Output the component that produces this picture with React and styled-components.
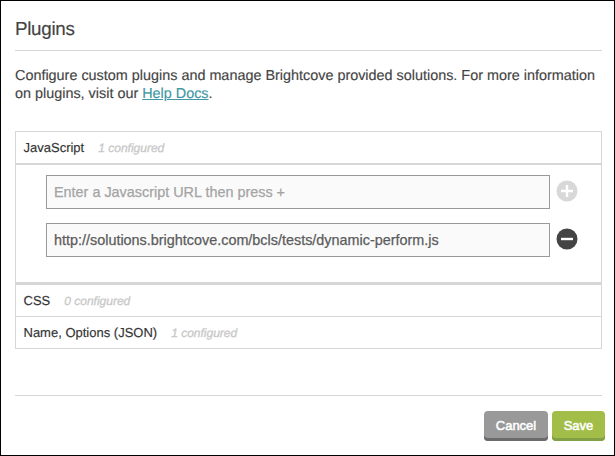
import React from 'react';
import styled, { createGlobalStyle } from 'styled-components';

const GlobalStyle = createGlobalStyle`
  *, *::before, *::after { box-sizing: border-box; }
  body { margin: 0; background: #fff; }
  button, input { font-family: inherit; }
`;

const Dialog = styled.main`
  display: flex;
  flex-direction: column;
  width: 615px;
  height: 456px;
  padding: 0 12px 0 14px;
  border: 1px solid #000;
  background: #fff;
  color: #444;
  font-family: "Liberation Sans", Arial, Helvetica, sans-serif;
  -webkit-text-stroke: 0.15px;
  text-rendering: geometricPrecision;
  overflow: hidden;
`;

const Title = styled.h1`
  height: 50px;
  margin: 0;
  padding-top: 17px;
  border-bottom: 1px solid #d6d6d6;
  font-size: 18.8px;
  font-weight: 400;
  letter-spacing: -0.3px;
  line-height: 22px;
`;

const Intro = styled.p`
  height: 80px;
  margin: 0;
  padding-top: 16px;
  font-size: 14.4px;
  line-height: 18px;
  white-space: nowrap;
`;

const DocsLink = styled.a`
  color: #4098a4;
  text-decoration: underline;
`;

const Accordion = styled.section`
  border: 1px solid #d6d6d6;
`;

const SectionHeader = styled.header`
  display: flex;
  align-items: center;
  gap: 14px;
  height: ${({ $height }) => $height}px;
  padding-left: 7.5px;
  border-bottom: ${({ $line }) => $line}px solid #d6d6d6;
  font-size: 13px;
  line-height: 16px;
`;

const SectionName = styled.span`
  color: #333;
`;

const Count = styled.em`
  color: #c8c8c8;
  font-size: 12px;
  -webkit-text-stroke: 0.3px;
`;

const SectionBody = styled.div`
  display: flex;
  flex-direction: column;
  gap: 14px;
  height: 120px;
  padding: 10px 0 0 30px;
  border-bottom: 3px solid #d6d6d6;
`;

const UrlRow = styled.div`
  display: flex;
  align-items: center;
  gap: 6px;
`;

const UrlInput = styled.input`
  width: 504px;
  height: 34px;
  padding: 0 7px;
  border: 1px solid #999;
  border-radius: 0;
  background: #fafafa;
  color: #5c5c5c;
  font-size: 14.4px;
  -webkit-text-stroke: 0.25px;
  outline: none;
  &::placeholder { color: #a4a4a4; opacity: 1; }
`;

const IconButton = styled.button`
  display: flex;
  padding: 0 0 2px;
  border: 0;
  background: none;
  color: ${({ $color }) => $color};
`;

const Footer = styled.footer`
  display: flex;
  gap: 4px;
  justify-content: flex-end;
  margin: 46px 0 0;
  padding-top: 15px;
  border-top: 1px solid #d6d6d6;
`;

const Button = styled.button`
  width: ${({ $width }) => $width}px;
  height: 30px;
  padding: 0 0 1px;
  border: 0;
  border-radius: 4px;
  background: ${({ $fill }) => $fill};
  box-shadow: inset 0 -3px ${({ $edge }) => $edge};
  color: #fff;
  font-size: 13px;
  -webkit-text-stroke: 0.5px;
  &:last-child { margin-right: -3px; }
`;

function CircleIcon({ plus }) {
  return (
    <svg width="22" height="22" viewBox="0 0 22 22" aria-hidden="true">
      <circle cx="11" cy="11" r="10.5" fill="currentColor" />
      <path d={plus ? 'M5 11h12M11 5v12' : 'M5 11h12'} stroke="#fff" strokeWidth="2.4" />
    </svg>
  );
}

export default function App() {
  return (
    <>
      <GlobalStyle />
      <Dialog>
        <Title>Plugins</Title>
        <Intro>
          Configure custom plugins and manage Brightcove provided solutions. For more information
          <br />
          on plugins, visit our <DocsLink href="#">Help Docs</DocsLink>.
        </Intro>
        <Accordion>
          <SectionHeader $height={33} $line={2}>
            <SectionName>JavaScript</SectionName>
            <Count>1 configured</Count>
          </SectionHeader>
          <SectionBody>
            <UrlRow>
              <UrlInput placeholder="Enter a Javascript URL then press +" />
              <IconButton $color="#d8d8d8" aria-label="Add"><CircleIcon plus /></IconButton>
            </UrlRow>
            <UrlRow>
              <UrlInput defaultValue="http://solutions.brightcove.com/bcls/tests/dynamic-perform.js" />
              <IconButton $color="#444" aria-label="Remove"><CircleIcon /></IconButton>
            </UrlRow>
          </SectionBody>
          <SectionHeader $height={32} $line={1}>
            <SectionName>CSS</SectionName>
            <Count>0 configured</Count>
          </SectionHeader>
          <SectionHeader $height={31} $line={0}>
            <SectionName>Name, Options (JSON)</SectionName>
            <Count>1 configured</Count>
          </SectionHeader>
        </Accordion>
        <Footer>
          <Button $width={64} $fill="#999" $edge="#6b6b6b">Cancel</Button>
          <Button $width={53} $fill="#a3bd49" $edge="#82a045">Save</Button>
        </Footer>
      </Dialog>
    </>
  );
}
